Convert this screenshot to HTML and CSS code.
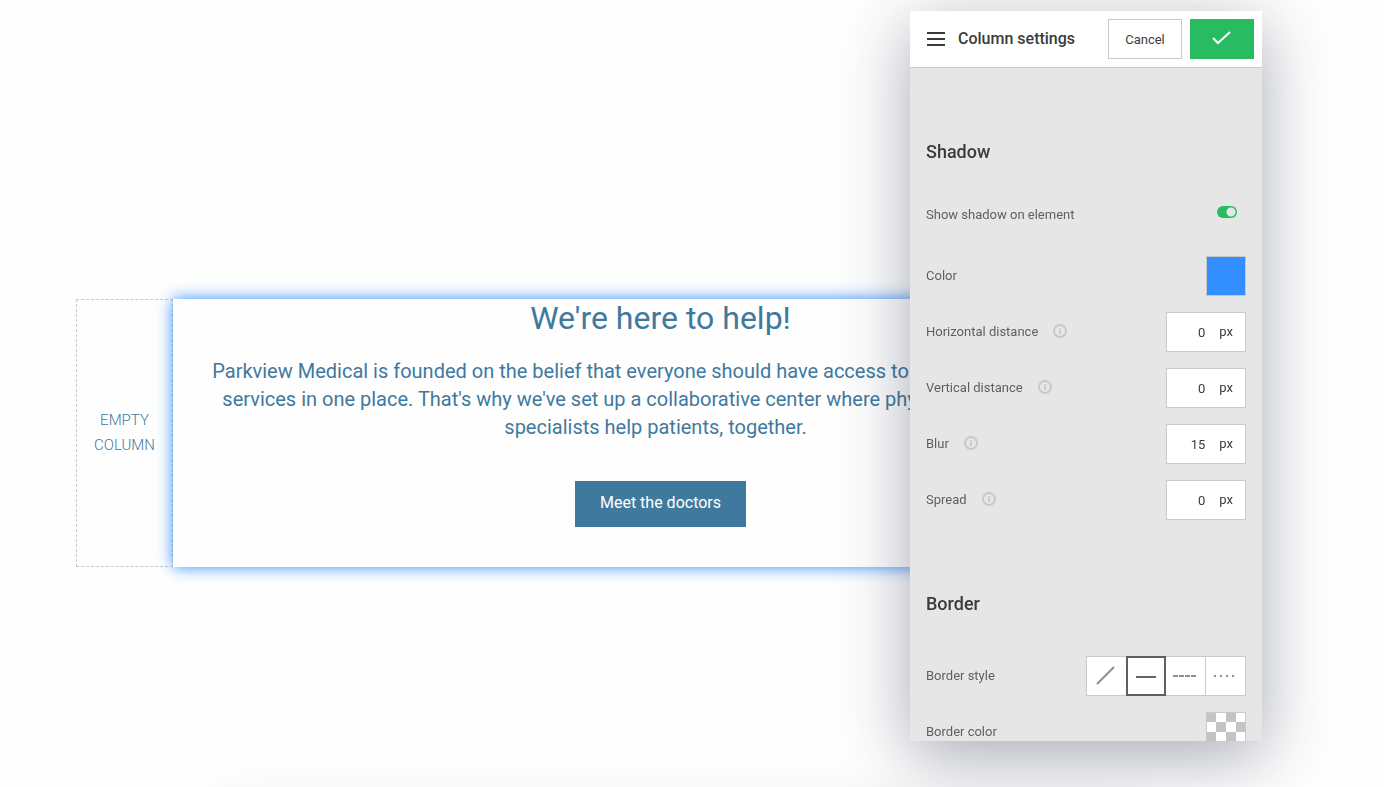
FILE: index.html
```html
<!DOCTYPE html>
<html lang="en">
<head>
  <meta charset="UTF-8" />
  <meta name="viewport" content="width=device-width, initial-scale=1.0" />
  <title>Parkview Medical</title>
  <link rel="stylesheet" href="styles.css">
</head>
<body>
  <main class="page">
    <section class="row">
      <div class="empty-column">EMPTY COLUMN</div>
      <div class="column">
        <h1>We're here to help!</h1>
        <p>Parkview Medical is founded on the belief that everyone should have access to all kinds of healthcare services in one place. That's why we've set up a collaborative center where physicians and qualified specialists help patients, together.&nbsp;&nbsp;</p>
        <a class="btn" href="#doctors">Meet the doctors</a>
      </div>
    </section>
    <section class="next-section" id="doctors"></section>
  </main>

  <aside class="panel">
    <header class="panel-header">
      <button type="button" class="menu-btn" aria-label="Menu">
        <svg width="20" height="16" viewBox="0 0 20 16" fill="none" stroke="#3b3b3b" stroke-width="2"><path d="M1 2h18M1 8h18M1 14h18"/></svg>
      </button>
      <h2>Column settings</h2>
      <button type="button" class="cancel-btn">Cancel</button>
      <button type="button" class="ok-btn" aria-label="Save">
        <svg width="20" height="16" viewBox="0 0 20 16" fill="none" stroke="#fff" stroke-width="2"><path d="M1 8l5 5L18 2"/></svg>
      </button>
    </header>

    <form class="panel-body">
      <h3>Shadow</h3>
      <div class="setting toggle-row">
        <label for="showShadow">Show shadow on element</label>
        <input type="checkbox" id="showShadow" class="toggle" checked />
      </div>
      <div class="setting">
        <label class="name" for="shadowColor">Color</label>
        <input type="color" id="shadowColor" class="swatch" value="#338fff" />
      </div>
      <div class="setting">
        <label class="name" for="hDist">Horizontal distance</label>
        <svg class="info" width="14" height="14" viewBox="0 0 14 14"><circle cx="7" cy="7" r="6" fill="none" stroke="#c9c9c9" stroke-width="2"/><path d="M6 4h2v1H6zM6 6h2v4H6z" fill="#c9c9c9"/></svg>
        <span class="field"><input type="number" id="hDist" value="0" /><span class="name">px</span></span>
      </div>
      <div class="setting">
        <label class="name" for="vDist">Vertical distance</label>
        <svg class="info" width="14" height="14" viewBox="0 0 14 14"><circle cx="7" cy="7" r="6" fill="none" stroke="#c9c9c9" stroke-width="2"/><path d="M6 4h2v1H6zM6 6h2v4H6z" fill="#c9c9c9"/></svg>
        <span class="field"><input type="number" id="vDist" value="0" /><span class="name">px</span></span>
      </div>
      <div class="setting">
        <label class="name" for="blur">Blur</label>
        <svg class="info" width="14" height="14" viewBox="0 0 14 14"><circle cx="7" cy="7" r="6" fill="none" stroke="#c9c9c9" stroke-width="2"/><path d="M6 4h2v1H6zM6 6h2v4H6z" fill="#c9c9c9"/></svg>
        <span class="field"><input type="number" id="blur" value="15" /><span class="name">px</span></span>
      </div>
      <div class="setting">
        <label class="name" for="spread">Spread</label>
        <svg class="info" width="14" height="14" viewBox="0 0 14 14"><circle cx="7" cy="7" r="6" fill="none" stroke="#c9c9c9" stroke-width="2"/><path d="M6 4h2v1H6zM6 6h2v4H6z" fill="#c9c9c9"/></svg>
        <span class="field"><input type="number" id="spread" value="0" /><span class="name">px</span></span>
      </div>

      <h3>Border</h3>
      <div class="setting">
        <span class="name" id="styleLabel">Border style</span>
        <div class="style-group" role="group" aria-labelledby="styleLabel">
          <button type="button" aria-label="None"><svg width="24" height="24" viewBox="0 0 24 24" stroke="#8f8f8f" stroke-width="2"><path d="M2 20L19 3"/></svg></button>
          <button type="button" class="active" aria-label="Solid"><svg width="24" height="24" viewBox="0 0 24 24" stroke="#666" stroke-width="2"><path d="M2 13h20"/></svg></button>
          <button type="button" aria-label="Dashed"><svg width="26" height="24" viewBox="0 0 26 24" stroke="#8f8f8f" stroke-width="2" stroke-dasharray="5 1"><path d="M0 12h23"/></svg></button>
          <button type="button" aria-label="Dotted"><svg width="26" height="24" viewBox="0 0 26 24" stroke="#8f8f8f" stroke-width="2" stroke-dasharray="2 4"><path d="M1 12h21"/></svg></button>
        </div>
      </div>
      <div class="setting">
        <label class="name" for="borderColor">Border color</label>
        <button type="button" id="borderColor" class="swatch checker"></button>
      </div>
    </form>
  </aside>
</body>
</html>
```

FILE: styles.css
```css
* {
  box-sizing: border-box;
}
body {
  margin: 0;
  font-family: Roboto, "Liberation Sans", sans-serif;
  background-color: #fefefe;
  color: #40799e;
}
h1, h2, h3, p {
  margin: 0;
}
button, input {
  font: inherit;
  color: inherit;
}
button {
  padding: 0;
  cursor: pointer;
}

/* page content */
.page {
  height: 100vh;
  overflow: hidden;
  padding: 299px 236px 0 76px;
}
.row {
  display: flex;
}
.empty-column {
  flex: 0 0 97px;
  display: flex;
  align-items: center;
  padding: 0 16px;
  border: 1px dashed #c8c8c8;
  text-align: center;
  font-size: 15px;
  font-weight: 300;
  line-height: 25px;
}
.column {
  flex: 1;
  padding: 0 32px 40px;
  text-align: center;
  background: #fefefe;
  box-shadow: 0 0 15px #338fff;
}
.column h1 {
  font-size: 32px;
  font-weight: 400;
  line-height: 38px;
}
.column p {
  margin: 20px 0 40px;
  font-size: 20px;
  line-height: 28px;
}
.btn {
  display: inline-block;
  padding: 0 25px 2px;
  font-size: 16px;
  line-height: 44px;
  color: #fff;
  background-color: #40799e;
  text-decoration: none;
  vertical-align: top;
}
.next-section {
  height: 200px;
  margin: 232px 0 0 140px;
  box-shadow: 0 0 40px rgba(0,0,0,0.08);
}

/* settings panel */
.panel {
  position: fixed;
  top: 11px;
  right: 122px;
  bottom: 46px;
  width: 352px;
  display: flex;
  flex-direction: column;
  background: #e6e6e6;
  color: #5f5f5f;
  font-size: 13px;
  box-shadow: 0 16px 64px rgba(30,36,60,0.38);
}
.panel-header {
  display: flex;
  align-items: center;
  gap: 8px;
  padding: 8px 8px 8px 16px;
  background: #fff;
  border-bottom: 1px solid #c9c9c9;
  color: #3b3b3b;
}
.panel-header h2 {
  flex: 1;
  padding: 0 0 2px 4px;
  font-size: 16px;
  font-weight: 500;
}
.menu-btn {
  display: flex;
  border: none;
  background: none;
}
.cancel-btn {
  width: 74px;
  height: 40px;
  border: 1px solid #c9c9c9;
  background: #fff;
}
.ok-btn {
  width: 64px;
  height: 40px;
  border: none;
  background: #29bb61;
}
.panel-body {
  flex: 1;
  min-height: 0;
  overflow-y: auto;
  scrollbar-width: none;
  padding: 0 16px;
}
.panel-body h3 {
  padding-top: 72px;
  margin-bottom: 40px;
  font-size: 18px;
  font-weight: 500;
  line-height: 24px;
  color: #3b3b3b;
}
.setting {
  display: flex;
  align-items: center;
  justify-content: space-between;
  height: 40px;
}
.setting + .setting {
  margin-top: 16px;
}
.toggle-row {
  height: 20px;
  margin-bottom: 32px;
}
.toggle-row + .setting {
  margin-top: 0;
}
.name {
  padding-bottom: 2px;
}
.info {
  margin: 0 auto 2px 15px;
}
.toggle {
  appearance: none;
  width: 20px;
  height: 12px;
  margin: 0 9px 4px 0;
  border-radius: 6px;
  background: radial-gradient(circle at 14px 6px, #e6e6e6 4px, #29bb61 5px);
}
.swatch {
  appearance: none;
  width: 40px;
  height: 40px;
  padding: 0;
  border: 1px solid #c9c9c9;
  background: none;
}
.swatch::-webkit-color-swatch-wrapper {
  padding: 0;
}
.swatch::-webkit-color-swatch {
  border: none;
}
.checker {
  background: conic-gradient(#fff 25%, #c4c4c4 0 50%, #fff 0 75%, #c4c4c4 0) 0 0 / 20px 20px border-box;
}
.field {
  display: flex;
  align-items: center;
  justify-content: flex-end;
  gap: 14px;
  width: 80px;
  height: 40px;
  padding-right: 12px;
  border: 1px solid #c9c9c9;
  background: #fff;
  color: #3b3b3b;
}
.field input {
  width: 30px;
  padding: 0;
  border: none;
  background: none;
  text-align: right;
  appearance: textfield;
}
.field input::-webkit-inner-spin-button {
  display: none;
}
.style-group {
  display: flex;
}
.style-group button {
  display: flex;
  align-items: center;
  justify-content: center;
  width: 40px;
  height: 40px;
  border: 1px solid #c9c9c9;
  border-left: none;
  background: #fff;
}
.style-group button:first-child {
  border-left: 1px solid #c9c9c9;
  border-right: none;
}
.style-group .active {
  border: 2px solid #5f5f5f;
}
```
